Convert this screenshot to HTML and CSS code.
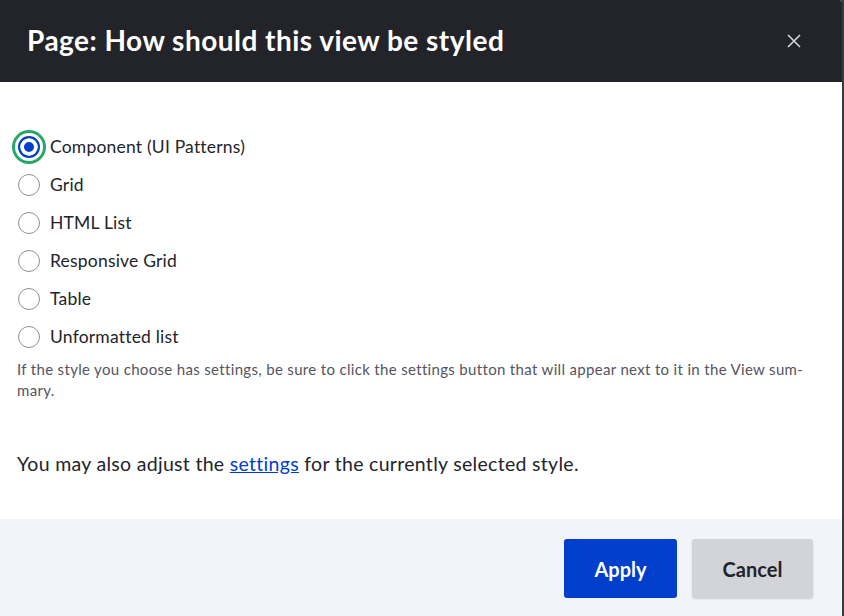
FILE: index.html
```html
<!DOCTYPE html>
<html lang="en">
<head>
<meta charset="utf-8">
<title>Page: How should this view be styled</title>
<link rel="stylesheet" href="styles.css">
</head>
<body>
<div class="dialog">
  <div class="header">
    <h1 class="title">Page: How should this view be styled</h1>
    <button class="close" aria-label="Close">
      <svg width="14" height="14" viewBox="0 0 14 14"><path d="M1 1L13 13M13 1L1 13" stroke="#d4d4d8" stroke-width="1.6" fill="none"/></svg>
    </button>
  </div>
  <div class="content">
    <div class="radios">
      <label class="option"><span class="radio checked"></span><span class="label">Component (UI Patterns)</span></label>
      <label class="option"><span class="radio"></span><span class="label">Grid</span></label>
      <label class="option"><span class="radio"></span><span class="label">HTML List</span></label>
      <label class="option"><span class="radio"></span><span class="label">Responsive Grid</span></label>
      <label class="option"><span class="radio"></span><span class="label">Table</span></label>
      <label class="option"><span class="radio"></span><span class="label">Unformatted list</span></label>
    </div>
    <p class="description">If the style you choose has settings, be sure to click the settings button that will appear next to it in the View sum-<br>mary.</p>
    <p class="note">You may also adjust the <a href="#" class="link">settings</a> for the currently selected style.</p>
  </div>
  <div class="footer">
    <button class="btn primary">Apply</button>
    <button class="btn secondary">Cancel</button>
  </div>
</div>
</body>
</html>
```

FILE: styles.css
```css
html, body {
  margin: 0;
  padding: 0;
}
body {
  background: #3a3b40;
  font-family: Lato, "Noto Sans", sans-serif;
  width: 844px;
  height: 616px;
  overflow: hidden;
}
.dialog {
  width: 842px;
  height: 616px;
  background: #fff;
  display: flex;
  flex-direction: column;
  border-top-right-radius: 3px;
  overflow: hidden;
}
.header {
  height: 82px;
  flex: none;
  background: #232429;
  display: flex;
  align-items: center;
  padding: 0 41px 0 27px;
  box-sizing: border-box;
}
.title {
  margin: 0;
  color: #fff;
  font-family: Lato, sans-serif;
  font-weight: 700;
  font-size: 28px;
  letter-spacing: 0.48px;
  line-height: 1;
  padding-bottom: 2px;
}
.close {
  margin-left: auto;
  background: none;
  border: 0;
  padding: 0;
  width: 14px;
  height: 14px;
  display: flex;
  cursor: pointer;
}
.content {
  flex: 1;
  padding: 46px 17px 0 17px;
  box-sizing: border-box;
}
.radios {
  display: flex;
  flex-direction: column;
}
.option {
  display: flex;
  align-items: center;
  height: 38px;
  gap: 10px;
  color: #232429;
  font-size: 17.5px;
  letter-spacing: 0.2px;
}
.radio {
  width: 22px;
  height: 22px;
  margin-left: 1px;
  box-sizing: border-box;
  border-radius: 50%;
  border: 1px solid #8e929c;
  background: #fff;
  flex: none;
}
.radio.checked {
  border: 2px solid #003ecc;
  background: #003ecc;
  box-shadow: inset 0 0 0 4px #fff, 0 0 0 3px #fff, 0 0 0 6px #26a769;
}
.label {
  line-height: 1;
}
.description {
  margin: 3px 0 0;
  color: #545560;
  font-size: 15px;
  letter-spacing: 0.33px;
  line-height: 21px;
}
.note {
  margin: 49px 0 0;
  font-size: 19.5px;
  letter-spacing: 0.3px;
  line-height: 27px;
  color: #232429;
}
.link {
  color: #003ecc;
  text-decoration: underline;
}
.footer {
  height: 97px;
  flex: none;
  background: #f3f4f9;
  display: flex;
  justify-content: flex-end;
  align-items: center;
  gap: 15px;
  padding-right: 29px;
  box-sizing: border-box;
}
.btn {
  height: 59px;
  border: 0;
  border-radius: 3px;
  font-family: Lato, "Noto Sans", sans-serif;
  font-weight: 700;
  font-size: 20px;
  padding: 0 30px;
  margin-top: 2px;
  cursor: pointer;
}
.primary {
  background: #003ecc;
  color: #fff;
  width: 113px;
}
.secondary {
  background: #d3d4d9;
  color: #232429;
  width: 121px;
  box-shadow: 0 1px 2px rgba(0,0,0,0.15);
}
```
